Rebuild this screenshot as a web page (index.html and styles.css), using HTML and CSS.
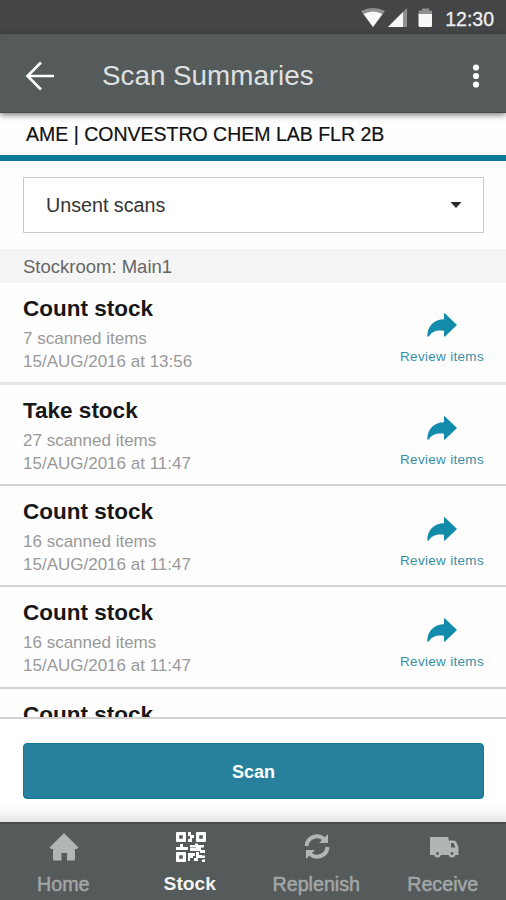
FILE: index.html
```html
<!DOCTYPE html>
<html lang="en">
<head>
<meta charset="utf-8">
<title>Scan Summaries</title>
<link rel="stylesheet" href="styles.css">
</head>
<body>
<svg class="defs" width="0" height="0"><symbol id="share" viewBox="0 0 30 24"><path d="M17 .5Q17-.3 18 .5L30 12 18 23.500Q17 24 17 23V17.800C10 17 4.500 18.500 2 23.500H.3C.3 13 7 6.500 17 6.300Z" fill="currentColor"/></symbol></svg>
<div class="screen">
  <div class="status">
    <svg width="74" height="20" viewBox="0 0 74 20"><path d="M0 3Q12-3 24 3L12 19Z" fill="#8d8f90"/><path d="M2.500 6Q12 1 21.500 6L12 19Z" fill="#f6f7f7"/><path d="M46 0V19H27Z" fill="#8d8f90"/><path d="M42 4V19H27Z" fill="#f6f7f7"/><path d="M61 0.500H68V2.500H70Q71 2.500 71 3.500V7H57.500V3.500Q57.500 2.500 58.500 2.500H61Z" fill="#8d8f90"/><path d="M57.500 6H71V17.500Q71 19 70 19H59Q57.500 19 57.500 17.500V6Z" fill="#f6f7f7"/></svg>
    <span class="clock">12:30</span>
  </div>
  <header class="appbar">
    <svg class="back" width="30" height="30" viewBox="0 0 30 30" fill="none" stroke="#fff" stroke-width="2.600"><path d="M29 15H2.500M16 1.500 2.500 15 16 28.500"/></svg>
    <h1>Scan Summaries</h1>
    <svg class="more" width="8" height="26" viewBox="0 0 8 26" fill="#fff"><circle cx="4" cy="4.500" r="3.100"/><circle cx="4" cy="13" r="3.100"/><circle cx="4" cy="21.500" r="3.100"/></svg>
  </header>
  <div class="site">AME | CONVESTRO CHEM LAB FLR 2B</div>
  <div class="filter"><div class="select"><span>Unsent scans</span><svg width="12" height="6" viewBox="0 0 12 6"><path d="M.5 0h11L6 6z" fill="#2b2b2b"/></svg></div></div>
  <div class="group">Stockroom: Main1</div>
  <main class="list">
    <div class="row first"><div><h2>Count stock</h2><p>7 scanned items</p><p>15/AUG/2016 at 13:56</p></div><div class="review"><svg width="30" height="24"><use href="#share"/></svg><span>Review items</span></div></div>
    <div class="row"><div><h2>Take stock</h2><p>27 scanned items</p><p>15/AUG/2016 at 11:47</p></div><div class="review"><svg width="30" height="24"><use href="#share"/></svg><span>Review items</span></div></div>
    <div class="row"><div><h2>Count stock</h2><p>16 scanned items</p><p>15/AUG/2016 at 11:47</p></div><div class="review"><svg width="30" height="24"><use href="#share"/></svg><span>Review items</span></div></div>
    <div class="row"><div><h2>Count stock</h2><p>16 scanned items</p><p>15/AUG/2016 at 11:47</p></div><div class="review"><svg width="30" height="24"><use href="#share"/></svg><span>Review items</span></div></div>
    <div class="row"><div><h2>Count stock</h2></div></div>
  </main>
  <div class="action"><button>Scan</button></div>
  <nav class="tabs">
    <div class="tab"><svg width="30" height="30" viewBox="0 0 30 30"><path d="M15 1 29.500 15.500 28 17H26V27.500Q26 28.500 25 28.500H18V21H12.500V28.500H5Q4 28.500 4 27.500V17H2L.5 15.500Z" fill="#b1b5b5"/></svg><span>Home</span></div>
    <div class="tab active"><svg width="30" height="30" viewBox="0 0 30 30" fill="#fff"><path fill-rule="evenodd" d="M1 0H9Q10 0 10 1V9Q10 10 9 10H1Q0 10 0 9V1Q0 0 1 0ZM3.200 3.200V6.800H6.800V3.200ZM21 0H29Q30 0 30 1V9Q30 10 29 10H21Q20 10 20 9V1Q20 0 21 0ZM23.200 3.200V6.800H26.800V3.200ZM1 20H9Q10 20 10 21V29Q10 30 9 30H1Q0 30 0 29V21Q0 20 1 20ZM3.200 23.200V26.800H6.800V23.200Z"/><path d="M12 0H15V3H18V6H16V10H12V7H14V4H12ZM0 15H4V12H7V15H12V18H0ZM14 13H19V11.500H22V13H28V15.500H25V18H29V21H24V19H14V16H20V15.500H14ZM12 21H19V24H17V26H14V29H12ZM20 20H23V23H26V26H22V29H18V26H20ZM26 23.500H29V26H26ZM26 27.500H29V30H26Z"/></svg><span>Stock</span></div>
    <div class="tab"><svg width="30" height="30" viewBox="0 0 30 30"><path d="M4.500 14A10.500 10.500 0 0 1 22 7M25.500 15A10.500 10.500 0 0 1 8 22" fill="none" stroke="#b1b5b5" stroke-width="4"/><path d="M26 2V11H17ZM4 27V18H13Z" fill="#b1b5b5"/></svg><span>Replenish</span></div>
    <div class="tab"><svg width="30" height="30" viewBox="0 0 30 30"><path d="M2 5H18.500Q19.500 5 19.500 6V8.500H24.500Q26.500 8.500 27.500 10.500L29.500 15V23H1V6Q1 5 2 5Z" fill="#b1b5b5"/><path d="M22 11H24.500L26.500 15.500H22Z" fill="#555a5a"/><g fill="#b1b5b5"><circle cx="8.500" cy="22.300" r="3.300"/><circle cx="23" cy="22.300" r="3.300"/></g><g fill="#555a5a"><circle cx="8.500" cy="21.500" r="1.400"/><circle cx="23" cy="21.500" r="1.400"/></g></svg><span>Receive</span></div>
  </nav>
</div>
</body>
</html>
```
FILE: styles.css
```css
* { box-sizing: border-box; margin: 0; padding: 0; }
body { font-family: "Liberation Sans", Arial, sans-serif; background: #fefefe; }
.defs { display: block; }
.screen { width: 506px; height: 900px; display: flex; flex-direction: column; overflow: hidden; }
.screen > * { flex-shrink: 0; }
.status { height: 34px; background: #434546; display: flex; justify-content: flex-end; align-items: center; gap: 10px; padding: 2px 12px 0 0; }
.clock { color: #eee; font-size: 19.5px; line-height: 24px; padding-top: 1px; -webkit-text-stroke: .3px #eee; }
.appbar { height: 79px; background: #555a5a; border-bottom: 1px solid #454949; display: flex; align-items: center; padding: 5px 26px 0 25px; box-shadow: 0 2px 6px rgba(0,0,0,.5); z-index: 1; }
.appbar h1 { font-size: 27.8px; font-weight: 400; color: #dfe1e1; margin-left: 47px; flex: 1; }
.site { height: 48px; border-bottom: 6px solid #0b7b99; padding-left: 26px; font-size: 19.5px; line-height: 43px; color: #111; -webkit-text-stroke: .2px #111; white-space: nowrap; }
.filter { height: 88px; padding: 16px 22px 0 23px; }
.select { height: 56px; border: 1.5px solid #c9c9c9; display: flex; align-items: center; justify-content: space-between; padding: 0 21px 0 22px; font-size: 19.7px; color: #333; background: #fff; }
.group { height: 34px; background: #f5f5f5; padding-left: 23px; line-height: 36px; font-size: 18.5px; color: #666; }
.list { height: 436px; overflow: hidden; border-bottom: 2px solid #d3d3d3; }
.row { height: 101.2px; border-bottom: 2px solid #d3d3d3; padding: 11px 22px 0 23px; display: flex; justify-content: space-between; }
.row.first { height: 102px; border-bottom: 3px solid #e6e6e6; }
.row h2 { font-size: 22.5px; line-height: 29px; font-weight: 700; color: #171717; margin-bottom: 5px; }
.row p { font-size: 17px; line-height: 22.6px; color: #999; }
.review { width: 84px; color: #138baa; display: flex; flex-direction: column; align-items: center; padding-top: 20px; }
.row.first .review { padding-top: 19px; }
.review span { font-size: 13.5px; letter-spacing: .3px; line-height: 18px; margin-top: 11px; white-space: nowrap; color: #398ea6; }
.action { height: 103px; padding: 24px 22px 0 23px; background: linear-gradient(#fff 80%, #f8f8f8 90%, #e6e6e6); }
.action button { width: 100%; height: 56px; border: 1.5px solid #0f7893; border-radius: 4px; background: #27819c; color: #fff; font: 700 18px "Liberation Sans", Arial, sans-serif; padding-top: 2px; display: block; }
.tabs { height: 78px; background: #555a5a; border-top: 2px solid #484c4c; display: grid; grid-template-columns: repeat(4, 1fr); }
.tab { display: flex; flex-direction: column; align-items: center; padding-top: 8px; color: #a3a7a7; font-size: 19.7px; -webkit-text-stroke: .5px #a3a7a7; }
.tab svg { position: relative; left: 1px; }
.tab span { line-height: 24px; margin-top: 10px; }
.tab.active { color: #f3f4f4; font-weight: 700; font-size: 19.2px; -webkit-text-stroke: 0; }
```
